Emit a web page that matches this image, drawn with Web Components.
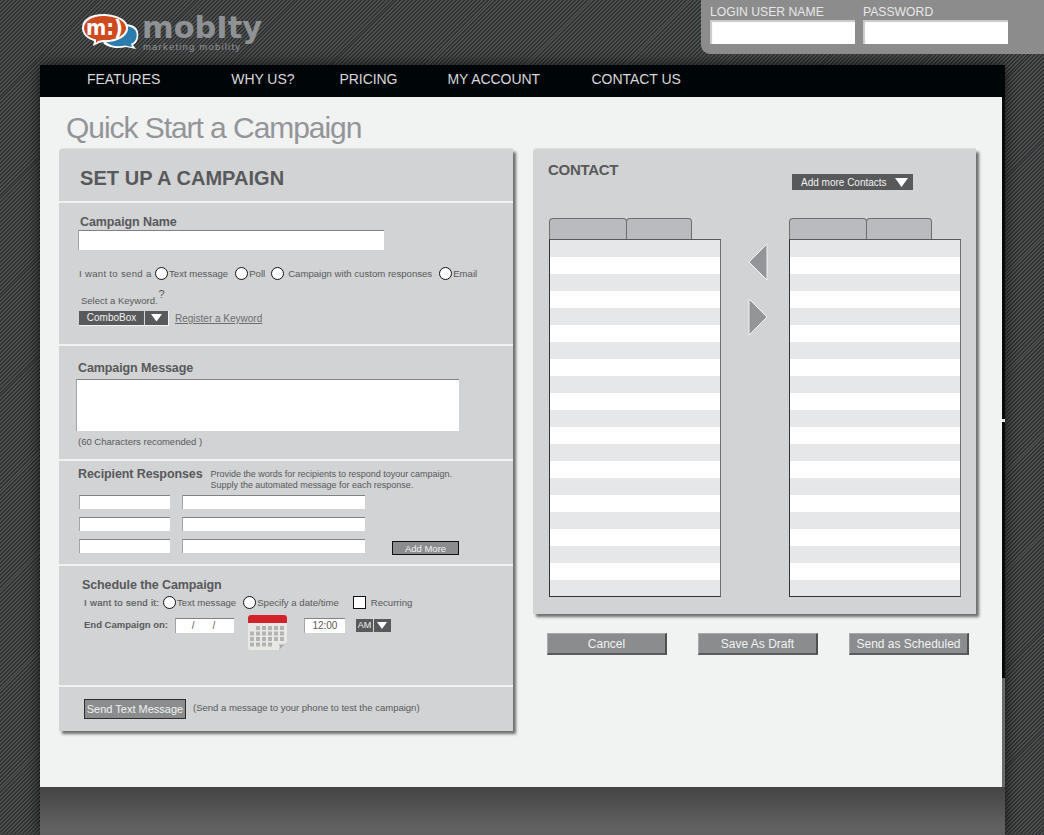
<!DOCTYPE html>
<html lang="en">
<head>
<meta charset="utf-8">
<title>Quick Start a Campaign</title>
<style>
html,body{margin:0;padding:0;background:#444}
body{font-family:"Liberation Sans",Arial,sans-serif;color:#58595b}
</style>
</head>
<body>
<m-page></m-page>
<script>
function def(name, css, html){
  customElements.define(name, class extends HTMLElement{
    constructor(){
      super();
      const r=this.attachShadow({mode:'open'});
      const t=document.createElement('template');
      t.innerHTML='<style>'+css+'</style>'+html;
      r.appendChild(t.content.cloneNode(true));
    }
  });
}
const TRI='<svg width="13" height="9" viewBox="0 0 13 9"><path d="M0 0H13L6.5 9Z" fill="#fff"/></svg>';

def('m-logo',':host{display:block;width:182px;height:40px;margin-top:13px}svg{display:block;overflow:visible}',
`<svg width="182" height="40" viewBox="0 0 182 40">
 <path d="M37 12 C52 9 58 16 56 25 C55 29 53 31 51 32 L54 36 L44 34 C36 36 26 35 21 30Z" fill="#fff"/>
 <path d="M38 14 C50 11 56 17 54.500 24 C54 28 51 30 49 31 L50 34 L43 32.500 C36 34 28 33 24 29Z" fill="#2a7bae"/>
 <path d="M21 1 C33 1 46 6 46 15 C46 25 32 30 21 29 L17 30 L11 33 L12 28 C5 26 0 21 0 15 C0 6 9 1 21 1Z" fill="#fff"/>
 <path d="M21 3 C32 3 44 7 44 15 C44 23 31 28 21 27 L16 28 L14 30 L14 26.500 C7 25 2 21 2 15 C2 8 10 3 21 3Z" fill="#cf4a1f"/>
 <text x="4" y="22" font-family="'DejaVu Sans',sans-serif" font-weight="700" font-size="21" fill="#fff" textLength="37" lengthAdjust="spacingAndGlyphs">m:)</text>
 <text x="60" y="25" font-family="'DejaVu Sans',sans-serif" font-weight="700" font-size="31" fill="#8f9294" textLength="120" lengthAdjust="spacingAndGlyphs">mobIty</text>
 <text x="61" y="37" font-family="'Liberation Sans',sans-serif" font-size="9.500" fill="#8f9294" textLength="98" letter-spacing="1">marketing mobility</text>
</svg>`);

def('m-login',`:host{display:flex;gap:8px;width:343px;height:54px;box-sizing:border-box;padding:5px 0 0 9px;background:#8c8c8c;border-bottom-left-radius:9px}
 label{display:block;width:145px;font-size:12.200px;line-height:15px;color:#e6e7e8;white-space:nowrap}
 i{display:block;height:24px;background:#fff;box-shadow:inset 2px 2px 1px #c9c9c9}`,
`<label>LOGIN USER NAME<i></i></label><label>PASSWORD<i></i></label>`);

def('m-nav',`:host{display:flex;box-sizing:border-box;height:32px;align-items:center;background:#000508;padding:0 0 4px 47px;color:#d7d8da;font-size:14px;letter-spacing:-.05px;white-space:nowrap}
 span:nth-of-type(2){margin-left:71px}span:nth-of-type(3){margin-left:45px}span:nth-of-type(4){margin-left:50px}span:nth-of-type(5){margin-left:51.500px}`,
`<span>FEATURES</span><span>WHY US?</span><span>PRICING</span><span>MY ACCOUNT</span><span>CONTACT US</span>`);

def('m-field',`:host{display:block;box-sizing:border-box;background:#fff;border-top:1px solid #808285;border-left:1px solid #a2a4a6;width:var(--w,100px);height:var(--h,14px)}`,'<slot></slot>');

def('m-radio',`:host{display:inline-flex;align-items:center;white-space:nowrap}
 i{display:block;flex:none;box-sizing:border-box;width:13px;height:13px;border:1px solid #111;border-radius:50%;background:#fff;margin-right:1px}`,
`<i></i><slot></slot>`);

def('m-btn',`:host{display:block;box-sizing:border-box;width:120px;height:22px;line-height:20px;text-align:center;background:#8a8c8e;color:#f1f2f2;font-size:12px;border-right:2px solid #4f5052;border-bottom:2px solid #5a5b5d;border-top:1px solid #a7a9ac;border-left:1px solid #a7a9ac}`,'<slot></slot>');

def('m-darkbtn',`:host{display:block;box-sizing:border-box;text-align:center;background:#8a8c8e;color:#f1f2f2;border:1px solid #111}`,'<slot></slot>');

def('m-combo',`:host{display:flex;gap:1px;height:14px;font-size:10px;color:#f1f2f2}
 span{display:block;background:#58595b;line-height:13px;text-align:center;width:var(--a,65px)}
 b{display:flex;align-items:center;justify-content:center;background:#58595b;width:var(--b,23px)}svg{width:var(--t,11px);height:auto;display:block}`,
`<span><slot></slot></span><b>${TRI}</b>`);

def('m-calendar',`:host{display:block;width:41px;height:37px}svg{display:block}`,
`<svg width="41" height="37" viewBox="0 0 41 37">
 <path d="M1 4 a3 3 0 0 1 3-3 H37 a3 3 0 0 1 3 3 V28 L32 36 H4 a3 3 0 0 1-3-3Z" fill="#e8e8e6"/>
 <path d="M40 28 C38 31 34 31 32 30 C33 32 33 34 32 36Z" fill="#a9aaa8"/>
 <path d="M1 9 V4 a3 3 0 0 1 3-3 H37 a3 3 0 0 1 3 3 V9Z" fill="#d2232a"/>
 <g fill="#b3b4b2">
 ${[0,1,2,3].map(r=>[0,1,2,3,4,5].map(c=>(r==0&&c==0)||(r==3&&c>3)?'':`<rect x="${3+c*6}" y="${12+r*5.500}" width="4" height="4"/>`).join('')).join('')}
 </g></svg>`);

def('m-list',`:host{display:block;flex:none;width:172px}
 .tabs{display:flex;height:21px}
 .tabs i{display:block;box-sizing:border-box;height:21px;background:#b9bbbe;border:1px solid #6d6e71;border-bottom:0;border-radius:4px 4px 0 0}
 .tabs i:first-child{width:78px}.tabs i:last-child{width:66px;margin-left:-1px}
 .box{box-sizing:border-box;height:358px;background:#fff;border:1px solid #333;border-top:1px solid #58595b;border-right:1px solid #6d6e71;overflow:hidden}
 .box div{height:17px;background:#fff}.box div:nth-child(odd){background:#e6e7e8}`,
`<div class="tabs"><i></i><i></i></div><div class="box">${'<div></div>'.repeat(21)}</div>`);

def('m-arrow',`:host{display:block;width:20px;height:38px}svg{display:block}`,'<svg width="20" height="38" viewBox="0 0 20 38"><path d="M19 1V37L1 19Z" fill="#939598" stroke="#f1f2f2" stroke-width="1"/></svg>');
def('m-arrow-r',`:host{display:block;width:20px;height:38px}svg{display:block}`,'<svg width="20" height="38" viewBox="0 0 20 38"><path d="M1 1V37L19 19Z" fill="#939598" stroke="#f1f2f2" stroke-width="1"/></svg>');

def('m-setup',`:host{display:block;flex:none;width:454px;height:582px;background:#d1d3d4;border-top-left-radius:4px;box-shadow:3px 3px 3px rgba(0,0,0,.55),0 -1px 0 #dfe0e1;font-size:9.600px;color:#58595b}
 section{box-sizing:border-box;border-bottom:2px solid #f1f2f2;white-space:nowrap}
 section:last-child{border:0}
 h2{margin:0;font-size:20px;line-height:24px;font-weight:700;letter-spacing:.05px}
 h3{margin:0;font-size:12.500px;line-height:16px;font-weight:700;letter-spacing:-.1px}
 .row{display:flex;align-items:center}
 .s1{height:54px;padding:17px 0 0 21px}
 .s2{height:143px;padding:11px 0 0 19px}
 .s2 h3{margin-left:2px}
 .s2 m-field{--w:306px;--h:20px}
 .send{margin:16px 0 0 1px;height:14px}
 .lead{display:block;width:71px;letter-spacing:.3px}
 .send m-radio:nth-of-type(1){margin-left:5px}
 .send m-radio:nth-of-type(2){margin-left:7px}
 .send m-radio:nth-of-type(3){margin-left:6px}
 .send m-radio:nth-of-type(3) span{margin-left:3px}
 .send m-radio:nth-of-type(4){margin-left:7px}
 .kw{margin:14px 0 0 3px;line-height:14px;height:14px;font-size:9.500px}
 .kw sup{font-size:11px;font-weight:400;line-height:0;vertical-align:6px;margin-left:1px}
 .cb{margin:3px 0 0 1px}
 .cb a{margin-left:6px;text-decoration:underline;font-size:10px;color:#6d6e71}
 .cb m-combo{border-right:1px solid #f1f2f2;border-bottom:1px solid #f1f2f2}
 .s3{height:115px;padding:14px 0 0 17px}
 .s3 h3{margin-left:2px}
 .s3 m-field{--w:383px;--h:52px;margin-top:3px}
 .s3 p{margin:5px 0 0 2px;font-size:9.500px;line-height:12px}
 .s4{height:105px;padding:5px 0 0 19px}
 .s4 .top{display:flex}
 .s4 .top p{margin:3px 0 0 8px;font-size:9px;line-height:10.500px;letter-spacing:-.02px}
 .s4 .g{display:grid;grid-template-columns:91px 183px auto;column-gap:12px;row-gap:8px;margin:5px 0 0 1px}
 .s4 m-field{--w:auto;--h:14px}
 .s4 m-darkbtn{width:67px;height:14px;margin:2px 0 0 15px;line-height:13px;font-size:9.500px}
 .s5{height:121px;padding:11px 0 0 23px}
 .s5 .w1{margin:2px 0 0 2px;height:14px}
 b.l{font-weight:700;font-size:9.500px}
 .l1{display:block;width:75px;letter-spacing:.3px;-webkit-text-stroke:.2px #58595b}
 .s5 .w1 m-radio:nth-of-type(1){margin-left:4px}
 .s5 .w1 m-radio:nth-of-type(2){margin-left:7px}
 .box{display:block;box-sizing:border-box;width:13px;height:13px;background:#fff;border:1px solid #111;margin:0 5px 0 14px}
 .w2{margin:5px 0 0 2px;align-items:flex-start}
 .w2 b.l{line-height:17px;margin-top:2px}
 .date{--w:59px;--h:15px;margin:4px 0 0 7px;display:block}
 .date span{display:flex;justify-content:center;gap:18px;line-height:14px;font-size:10px;padding-right:3px}
 .date span span{padding:0}
 .time{--w:41px;--h:15px;margin:4px 0 0 16px;text-align:center;font-size:10px;line-height:14px}
 m-calendar{margin-left:13px}
 .am{margin:5px 0 0 11px;--a:17px;--b:17px;--t:10px;height:13px;font-size:9px}
 .s6{height:44px;padding:12px 0 0 25px}
 .s6 m-darkbtn{width:102px;height:20px;line-height:19px;font-size:11px;border:1.500px solid #2d2d2d}
 .s6 span{margin-left:7px;margin-top:-4px;font-size:9.500px}`,
`<section class="s1"><h2>SET UP A CAMPAIGN</h2></section>
<section class="s2">
 <h3>Campaign Name</h3>
 <m-field></m-field>
 <div class="row send"><span class="lead">I want to send a</span><m-radio>Text message</m-radio><m-radio>Poll</m-radio><m-radio><span>Campaign with custom responses</span></m-radio><m-radio>Email</m-radio></div>
 <div class="kw">Select a Keyword.<sup>?</sup></div>
 <div class="row cb"><m-combo>ComboBox</m-combo><a>Register a Keyword</a></div>
</section>
<section class="s3">
 <h3>Campaign Message</h3>
 <m-field></m-field>
 <p>(60 Characters recomended )</p>
</section>
<section class="s4">
 <div class="top"><h3>Recipient Responses</h3><p>Provide the words for recipients to respond toyour campaign.<br>Supply the automated message for each response.</p></div>
 <div class="g">
  <m-field></m-field><m-field></m-field><span></span>
  <m-field></m-field><m-field></m-field><span></span>
  <m-field></m-field><m-field></m-field><m-darkbtn>Add More</m-darkbtn>
 </div>
</section>
<section class="s5">
 <h3>Schedule the Campaign</h3>
 <div class="row w1"><span class="l1">I want to send it:</span><m-radio>Text message</m-radio><m-radio>Specify a date/time</m-radio><i class="box"></i>Recurring</div>
 <div class="row w2"><b class="l">End Campaign on:</b><m-field class="date"><span><span>/</span><span>/</span></span></m-field><m-calendar></m-calendar><m-field class="time">12:00</m-field><m-combo class="am">AM</m-combo></div>
</section>
<section class="s6"><div class="row"><m-darkbtn>Send Text Message</m-darkbtn><span>(Send a message to your phone to test the campaign)</span></div></section>`);

def('m-contact',`:host{display:block;flex:none;width:443px;height:465px;box-sizing:border-box;background:#d1d3d4;border-top-left-radius:4px;box-shadow:3px 3px 3px rgba(0,0,0,.55),0 -1px 0 #dfe0e1;padding:12px 15px 0 15px;color:#58595b}
 .head{display:flex;justify-content:space-between;height:57px}
 h2{margin:0;font-size:15px;line-height:18px;font-weight:700;letter-spacing:-.3px}
 .lists{display:flex;margin-left:1px}
 .mid{flex:none;width:68px;display:flex;flex-direction:column;align-items:flex-start;padding:25px 0 0 27px;box-sizing:border-box;gap:17px}
 .c{display:flex;align-items:center;height:16px;background:#58595b;color:#f1f2f2;font-size:10px;width:121px;padding-left:9px;box-sizing:border-box;gap:8px;margin:13px 48px 0 0;white-space:nowrap}
 .c svg{display:block;flex:none}`,
`<div class="head"><h2>CONTACT</h2><div class="c">Add more Contacts ${TRI}</div></div>
<div class="lists"><m-list></m-list><div class="mid"><m-arrow></m-arrow><m-arrow-r></m-arrow-r></div><m-list></m-list></div>`);

def('m-actions',`:host{display:flex;justify-content:space-between;padding:19px 6px 0 14px;width:422px;color:#f1f2f2}`,
`<m-btn>Cancel</m-btn><m-btn>Save As Draft</m-btn><m-btn>Send as Scheduled</m-btn>`);

def('m-page',`:host{display:block;width:1044px;height:835px;overflow:hidden;background:repeating-linear-gradient(135deg,#2f3232 0 1.400px,#4f5151 1.400px 2.800px)}
 .top{display:flex;justify-content:space-between;height:65px;padding-left:82px;box-sizing:border-box}
 .shell{width:965px;height:770px;margin-left:40px;box-shadow:0 0 14px rgba(0,0,0,.7);background:linear-gradient(#434343,#616161 40px) 0 100%/100% 48px no-repeat,#616161}
 .mainrow{display:flex;height:690px}
 .content{width:962px;height:690px;box-sizing:border-box;background:#f1f2f2;padding:13px 0 0 19px}
 .edge{width:3px;height:690px;background:linear-gradient(#0a0a0a 0 322px,#e6e7e8 322px 325px,#0a0a0a 325px 581px,#6a6a6a 581px)}
 h1{margin:0 0 0 7px;font-size:30px;line-height:36px;font-weight:400;color:#939598;letter-spacing:-1.050px;white-space:nowrap}
 .cols{display:flex;gap:20px;margin-top:3px}`,
`<div class="top"><m-logo></m-logo><m-login></m-login></div>
<div class="shell"><m-nav></m-nav>
 <div class="mainrow"><div class="content"><h1>Quick Start a Campaign</h1>
  <div class="cols"><m-setup></m-setup><div><m-contact></m-contact><m-actions></m-actions></div></div>
 </div><div class="edge"></div></div>
</div>`);
</script>
</body>
</html>
